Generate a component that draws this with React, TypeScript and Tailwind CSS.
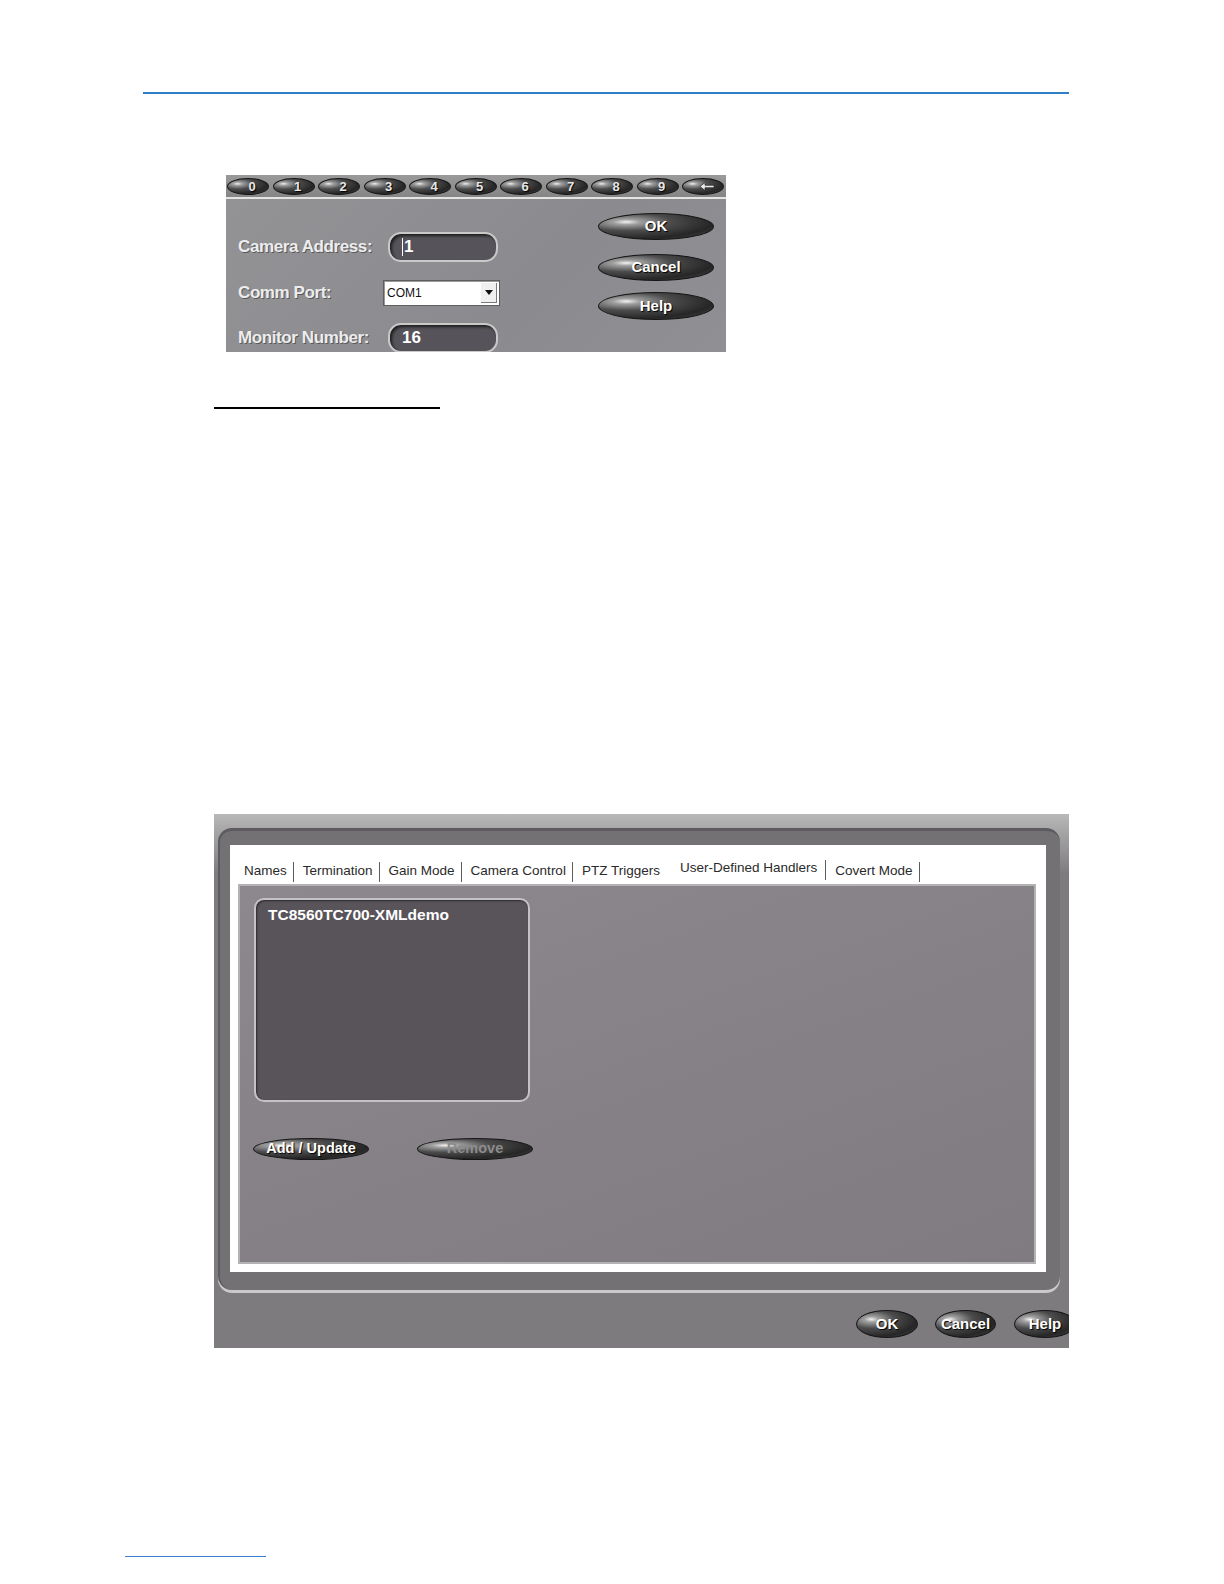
import React from 'react';

const pill =
  'flex items-center justify-center rounded-[50%] border border-[#161616] bg-[radial-gradient(ellipse_at_24%_32%,#f2f2f2_0%,#a0a0a0_11%,#4c4c4c_36%,#262626_70%,#505050_100%)] font-bold shrink-0';
const lit = 'text-white [text-shadow:1px_1px_1px_#000]';

const keys = ['0', '1', '2', '3', '4', '5', '6', '7', '8', '9', '←'];

const tabs = [
  { label: 'Names', sep: true },
  { label: 'Termination', sep: true },
  { label: 'Gain Mode', sep: true },
  { label: 'Camera Control', sep: true },
  { label: 'PTZ Triggers', sep: false },
  { label: 'User-Defined Handlers', sep: true, active: true },
  { label: 'Covert Mode', sep: true },
];

const label = 'text-[17px] font-bold tracking-[-0.4px] text-[#ededed] [text-shadow:1px_1px_0_#5a5a5a]';

function InsetField({ value, caret }: { value: string; caret?: boolean }) {
  return (
    <div className="flex h-[30px] w-[110px] items-center rounded-[13px] border-2 border-[#c9c9c9] bg-[#56545a] pl-[12px] shadow-[inset_2px_2px_3px_#1e1e1e] text-[17px] font-bold text-white">
      {caret && <span className="mr-[1px] h-[18px] w-px bg-white" />}
      {value}
    </div>
  );
}

function CameraDialog() {
  return (
    <div className="ml-[226px] w-[500px] h-[177px] overflow-hidden font-['Liberation_Sans',Arial,sans-serif]">
      {/* keypad */}
      <div className="flex h-[22px] items-center gap-[3.5px] bg-[linear-gradient(#9a9a9a,#858585)] px-[1px]">
        {keys.map((k) => (
          <div key={k} className={`${pill} h-[17px] w-[42px] text-[13px] text-[#e6e6e6] [text-shadow:1px_1px_1px_#000]`}>
            {k === '←' ? (
              <svg className="ml-[8px]" width="16" height="9" viewBox="0 0 16 9">
                <path d="M1 4.5L6 0.5V3.3H15V5.7H6V8.5Z" fill="#e8e8e8" stroke="#111" strokeWidth="0.6" />
              </svg>
            ) : (
              <span className="pl-[8px] leading-none">{k}</span>
            )}
          </div>
        ))}
      </div>
      <div className="h-[2px] bg-[#e4e4e4]" />
      {/* body */}
      <div className="flex h-[153px] bg-[linear-gradient(135deg,#939295,#8b8a8e_60%,#908f93)]">
        <div className="flex flex-col pl-[12px] pt-[33px]">
          <div className="flex h-[30px] items-center">
            <span className={`w-[150px] ${label}`}>Camera Address:</span>
            <InsetField value="1" caret />
          </div>
          <div className="mt-[18px] flex h-[26px] items-center">
            <span className={`w-[145px] ${label}`}>Comm Port:</span>
            <div className="flex h-[26px] w-[117px] items-center border border-[#5e5e5e] bg-white shadow-[inset_1px_1px_0_#9a9a9a]">
              <span className="flex-1 pl-[3px] text-[12px] text-[#111]">COM1</span>
              <div className="mr-[2px] flex h-[20px] w-[16px] items-center justify-center border-r border-b border-[#7a7a7a] bg-[#f0f0f0]">
                <svg width="8" height="5" viewBox="0 0 8 5">
                  <path d="M0 0h8L4 5z" fill="#111" />
                </svg>
              </div>
            </div>
          </div>
          <div className="mt-[17px] flex h-[30px] items-center">
            <span className={`w-[150px] ${label}`}>Monitor Number:</span>
            <InsetField value="16" />
          </div>
        </div>
        <div className="ml-[98px] flex flex-col pt-[14px]">
          <div className={`${pill} ${lit} h-[27px] w-[116px] text-[15px]`}>OK</div>
          <div className={`${pill} ${lit} mt-[14px] h-[27px] w-[116px] text-[15px]`}>Cancel</div>
          <div className={`${pill} ${lit} mt-[11px] h-[28px] w-[116px] text-[15px]`}>Help</div>
        </div>
      </div>
    </div>
  );
}

function HandlersDialog() {
  return (
    <div className="ml-[214px] flex h-[534px] w-[855px] flex-col overflow-hidden bg-[linear-gradient(#b9b9b9_0px,#a9a9a9_14px,#7e7b7f_60px,#7e7b7f)] font-['Liberation_Sans',Arial,sans-serif]">
      <div className="h-[14px] shrink-0" />
      {/* frame */}
      <div className="ml-[4px] mr-[9px] h-[462px] shrink-0 rounded-[14px] border-t-[3px] border-l-[2px] border-[#5d5b5f] bg-[#747175] pl-[10px] pr-[14px] pt-[14px] pb-[18px] shadow-[0_3px_0_#c9c9c9]">
        <div className="flex h-[427px] flex-col bg-white pl-[8px] pr-[10px] pt-[14px] pb-[8px]">
          {/* tabs */}
          <div className="flex h-[25px] items-end pl-[6px] text-[13.5px] text-[#2a2a2a]">
            {tabs.map((t) => (
              <div key={t.label} className="flex items-center">
                <span className={t.active ? 'pb-[6px] pl-[14px] pr-[8px]' : 'pb-[3px] pr-[6px]'}>{t.label}</span>
                {t.sep && <span className="mb-[1px] mr-[8px] h-[20px] w-[2px] border-r border-[#ffffff] bg-[#5c5c5c]" />}
              </div>
            ))}
          </div>
          {/* content panel */}
          <div className="flex-1 border-2 border-[#b3b3b3] bg-[linear-gradient(160deg,#8c888d,#858186_50%,#7f7b80)] pl-[14px] pt-[12px]">
            <div className="h-[204px] w-[276px] rounded-[10px] border-2 border-[#c4c2c6] bg-[#58545a] pl-[12px] pt-[3px] shadow-[inset_1px_1px_2px_#2a2a2a]">
              <span className="text-[15.5px] font-bold text-white">TC8560TC700-XMLdemo</span>
            </div>
            <div className="mt-[36px] flex">
              <div className={`${pill} ${lit} -ml-[1px] h-[22px] w-[116px] text-[14.5px]`}>Add / Update</div>
              <div className={`${pill} ml-[48px] h-[22px] w-[116px] text-[14.5px] text-[#8c8c8c]`}>Remove</div>
            </div>
          </div>
        </div>
      </div>
      {/* bottom buttons */}
      <div className="flex pl-[642px] pt-[20px]">
        <div className={`${pill} ${lit} h-[28px] w-[62px] text-[15px]`}>OK</div>
        <div className={`${pill} ${lit} ml-[17px] h-[28px] w-[61px] text-[15px]`}>Cancel</div>
        <div className={`${pill} ${lit} ml-[18px] h-[28px] w-[62px] text-[15px]`}>Help</div>
      </div>
    </div>
  );
}

export default function App() {
  return (
    <div className="h-[1584px] w-[1224px] overflow-hidden bg-white pt-[92px]">
      <div className="ml-[143px] h-[2px] w-[926px] bg-[#2d80c6]" />
      <div className="h-[81px]" />
      <CameraDialog />
      <div className="ml-[214px] mt-[55px] h-[2px] w-[226px] bg-black" />
      <div className="h-[405px]" />
      <HandlersDialog />
      <div className="ml-[125px] mt-[208px] h-px w-[141px] bg-[#3a7fd0]" />
    </div>
  );
}
